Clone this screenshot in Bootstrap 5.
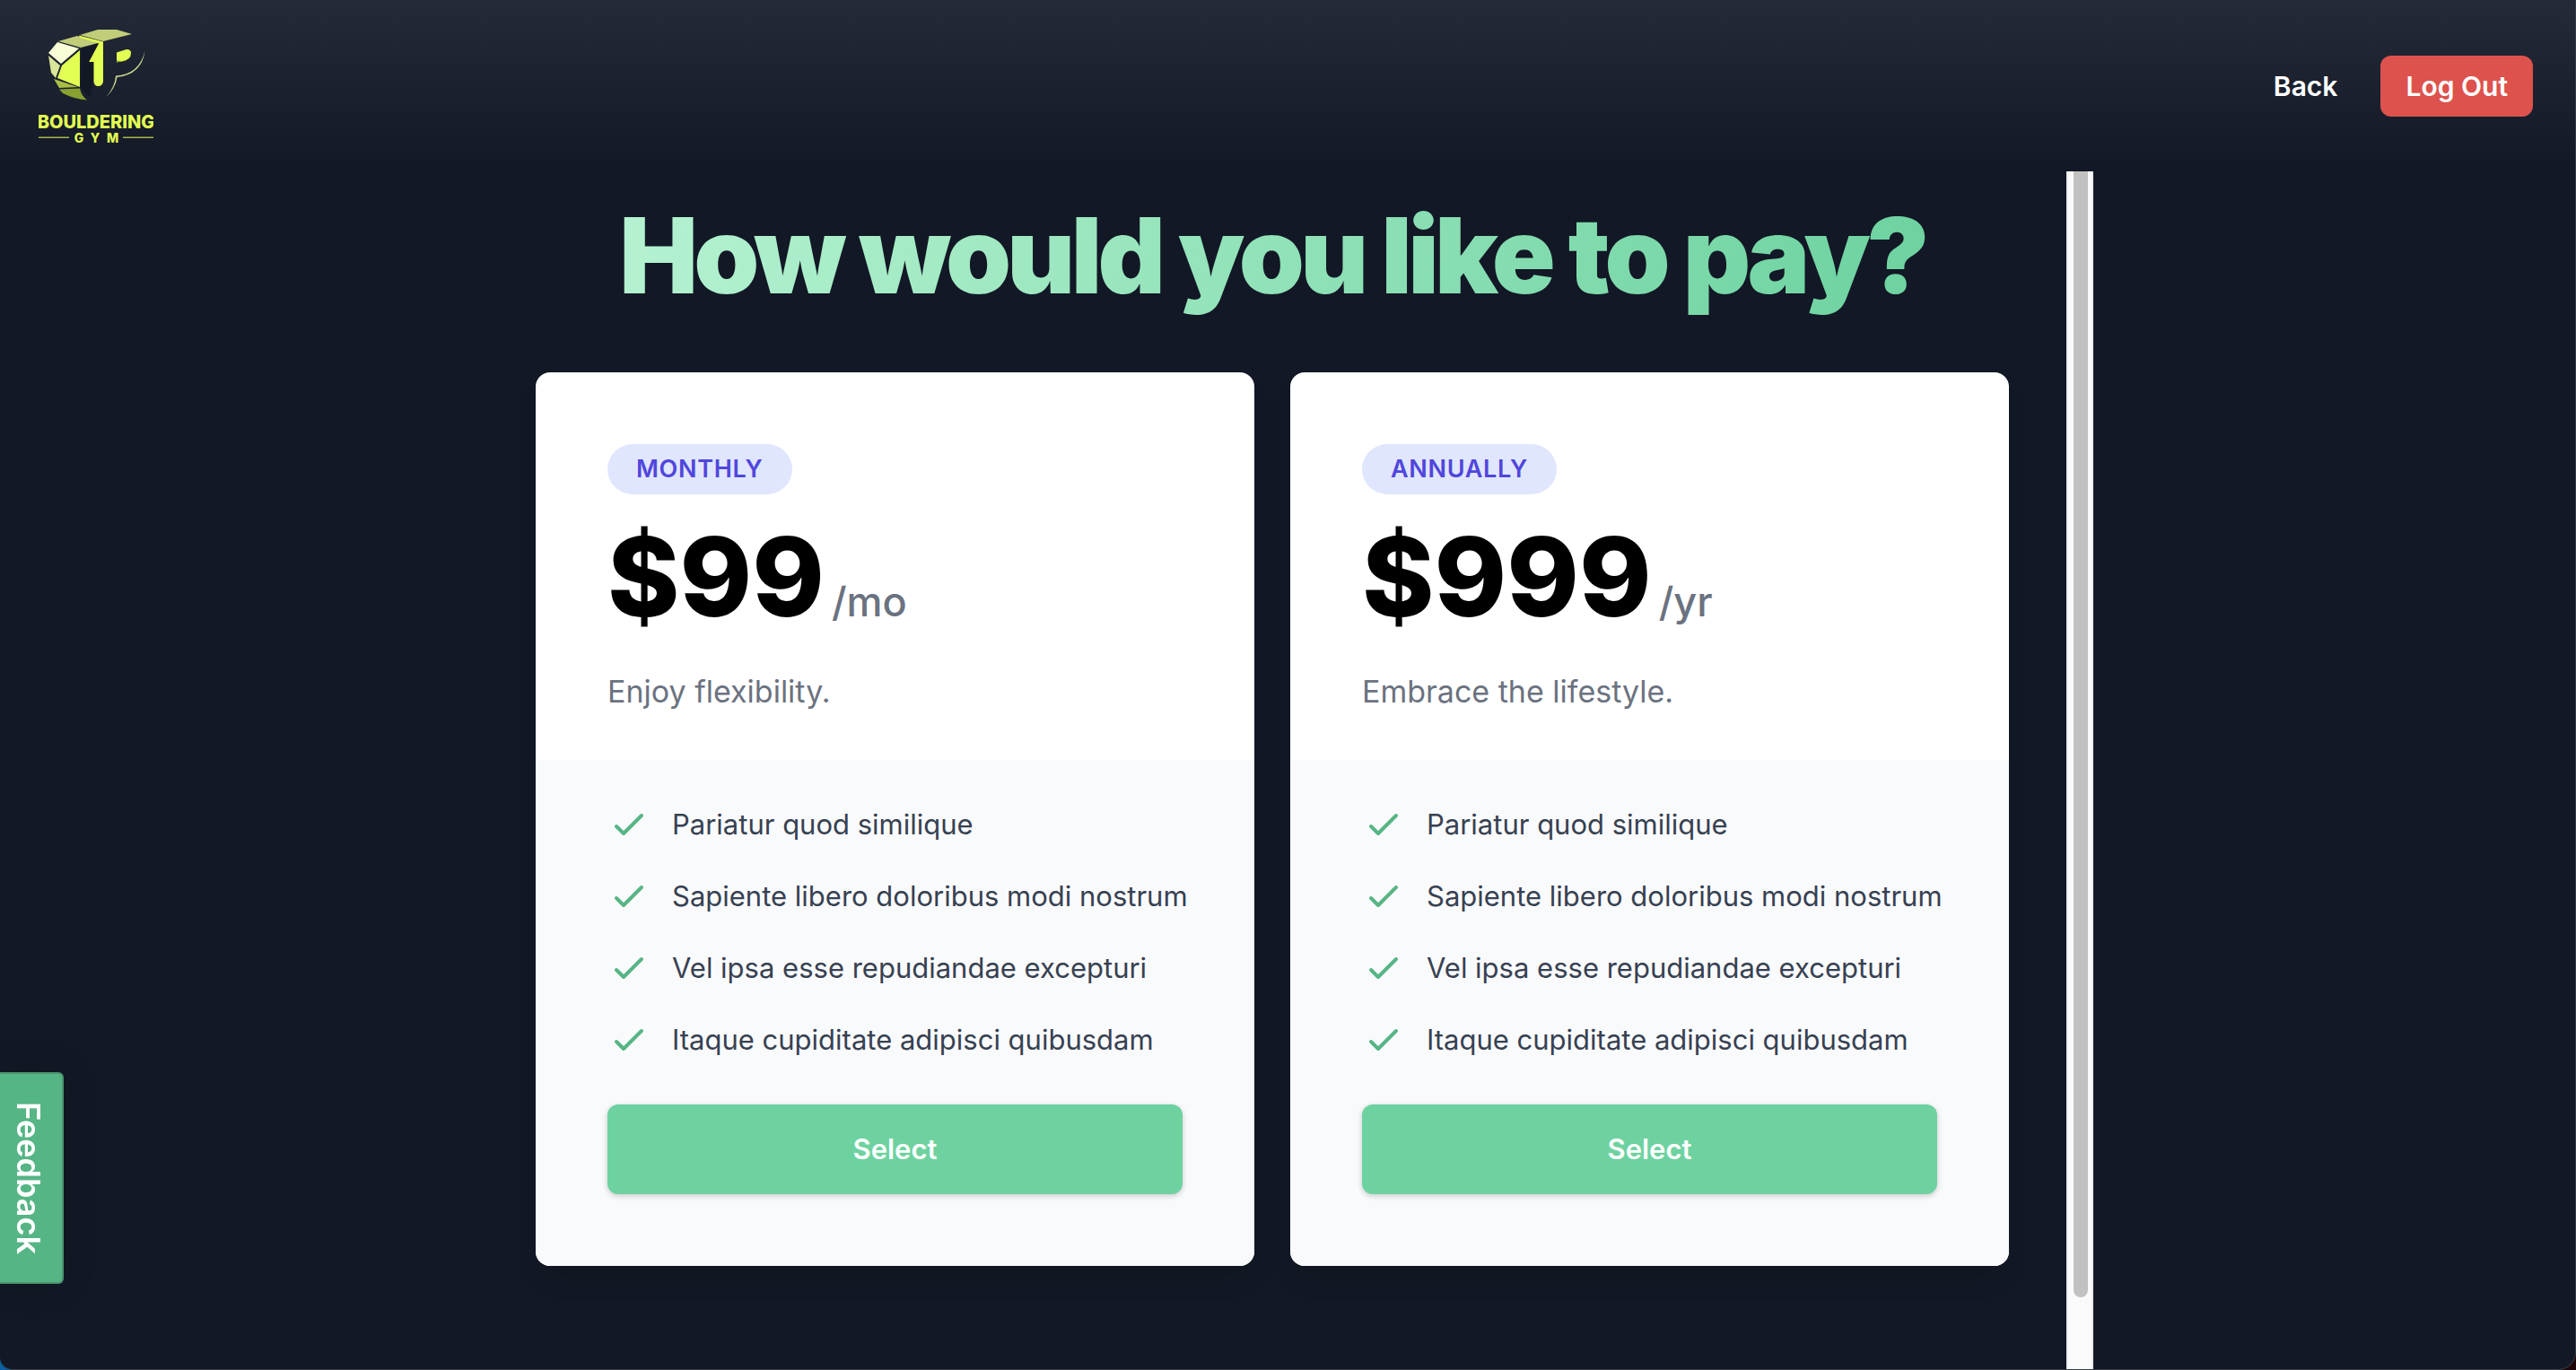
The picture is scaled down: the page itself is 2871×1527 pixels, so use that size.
<!DOCTYPE html>
<html lang="en">
<head>
<meta charset="utf-8">
<meta name="viewport" content="width=device-width, initial-scale=1">
<title>Bouldering Gym – Payment</title>
<link href="https://cdn.jsdelivr.net/npm/bootstrap@5.3.0/dist/css/bootstrap.min.css" rel="stylesheet">
<style>
  html { background: linear-gradient(to right, #0b5f9e, #1c0609 50%); min-height: 100%; }
  body {
    background: transparent;
    color: #374151;
    font-family: Inter, "Liberation Sans", sans-serif;
    font-size: 31px;
    line-height: 48px;
  }
  .app-shell {
    background: #121825;
    border-right: 1px solid #363b47;
    border-bottom: 1px solid #363b47;
    border-radius: 0 0 20px 14px;
    overflow: hidden;
  }
  .topbar {
    min-height: 191px;
    padding: 0 47px 0 43px;
    background: linear-gradient(#242a38, #121825);
  }
  .gym-logo { width: 128px; height: 128px; display: block; }
  .back-link, .back-link:hover { color: #fff; font-size: 30px; font-weight: 600; text-decoration: none; }
  .btn-logout {
    --bs-btn-color: #fff;
    --bs-btn-bg: #dd524c;
    --bs-btn-hover-color: #fff;
    --bs-btn-hover-bg: #c94640;
    --bs-btn-border-width: 0;
    --bs-btn-border-radius: 12px;
    --bs-btn-padding-x: 28px;
    --bs-btn-padding-y: 10px;
    --bs-btn-font-size: 30px;
    --bs-btn-line-height: 48px;
    --bs-btn-font-weight: 600;
  }
  .pay-panel { width: 100%; max-width: 1796px; }
  .pay-content { padding: 14px 64px 64px 60px; }
  .pay-title {
    font-size: 117px;
    line-height: 160px;
    font-weight: 900;
    letter-spacing: -0.04em;
    margin-bottom: 50px;
  }
  .pay-title span {
    background: linear-gradient(100deg, #b5f2d1, #6dd2a0);
    -webkit-background-clip: text;
    background-clip: text;
    color: transparent;
  }
  .plan-row { --bs-gutter-x: 40px; --bs-gutter-y: 40px; }
  .plan-card {
    --bs-card-border-width: 0;
    --bs-card-border-radius: 16px;
    --bs-card-inner-border-radius: 16px;
    --bs-card-bg: #fff;
    overflow: hidden;
    box-shadow: 0 20px 30px -6px rgba(0, 0, 0, .08);
  }
  .plan-head { padding: 80px 80px 48px; }
  .plan-body { padding: 48px 80px 80px; background: #f9fafc; }
  .plan-tag {
    padding: 4px 32px;
    background: #e0e6fd;
    color: #5046dc;
    font-size: 27px;
    line-height: 48px;
    font-weight: 600;
    letter-spacing: 0.025em;
    text-transform: uppercase;
  }
  .plan-price { margin-top: 32px; color: #000; font-size: 122px; line-height: 120px; font-weight: 800; }
  .plan-period { margin-left: 8px; color: #6b7280; font-size: 45px; line-height: 48px; font-weight: 500; }
  .plan-blurb { margin: 40px 0 0; color: #6b7280; font-size: 34px; line-height: 56px; }
  .perk-list { gap: 32px; margin-bottom: 48px; }
  .perk-list svg { width: 48px; height: 48px; margin-right: 24px; stroke: #56b585; }
  .btn-select {
    --bs-btn-color: #fff;
    --bs-btn-bg: #6dd2a0;
    --bs-btn-hover-color: #fff;
    --bs-btn-hover-bg: #5bc490;
    --bs-btn-border-width: 0;
    --bs-btn-border-radius: 12px;
    --bs-btn-padding-y: 26px;
    --bs-btn-font-size: 31px;
    --bs-btn-line-height: 48px;
    --bs-btn-font-weight: 600;
    box-shadow: 0 2px 6px rgba(0, 0, 0, .2);
  }
  .scroll-track {
    width: 30px;
    padding: 0 4px 0 6px;
    background: #fafafa;
    border: solid #ececec;
    border-width: 0 2px;
  }
  .scroll-thumb { width: 16px; height: 94%; background: #c1c1c1; border-radius: 0 0 8px 8px; }
  .feedback-tab {
    left: 0;
    bottom: 96px;
    width: 71px;
    padding: 31px 5px 31px 0;
    writing-mode: vertical-rl;
    background: #56b585;
    border: 2px solid #4a946f;
    border-left: 0;
    border-radius: 0 6px 6px 0;
    color: #fff;
    font-size: 36px;
    line-height: 64px;
    font-weight: 600;
    box-shadow: 0 0 40px rgba(0, 0, 0, .1);
  }
</style>
</head>
<body>
<div class="app-shell d-flex flex-column min-vh-100">
  <header class="topbar d-flex align-items-center justify-content-between">
    <a href="#" aria-label="Bouldering Gym home">
      <svg class="gym-logo" viewBox="43 31 128 128" aria-hidden="true">
        <path fill="#c1cd79" d="M65 45 86 39 113 46 90 52Z"/>
        <path fill="#c1cd79" d="M89 38 109 32H130L147 37 115 45Z"/>
        <path fill="#f8ffd6" d="M64 46 88 53 68 70 54 58Z"/>
        <path fill="#d9e598" d="M54 61 67 72 62 86 57 80Z"/>
        <path fill="#e2ff53" d="M69 72 89 55V96L64 86Z"/>
        <path fill="#a7bd45" d="M60 87 87 96 66 97Z"/>
        <path fill="#8aa031" d="M66 98.500 89 97.500Q90 105 97 110.500 84 110 70 103Z"/>
        <path fill="#e2ff53" d="M88 38.500 115 45.500V90Q114 95 109.500 95 105 95 104.500 90V68L99 68 110 47 89 41Z"/>
        <path fill="#121825" opacity=".9" d="M91 53 110 47.500 99 68H104V90L100 108 90 96Z"/>
        <path fill="#e2ff53" d="M130 57.500 141 54Q146 54 146 58 146 66 136 67.500L130 68Z"/>
        <path fill="#8aa031" d="M130 66.500 135 67 130 69Z"/>
        <path fill="#cbd78f" d="M161.500 56Q155 82 129 83.500 128 96 118 107.500 129 97 130.500 85 158 82 161.500 56Z"/>
        <g fill="#e2ff53" font-family="Inter, sans-serif" font-weight="800" text-anchor="middle">
          <text x="107" y="142" font-size="20">BOULDERING</text>
          <text x="88 106 125.500" y="157.500" font-size="14">GYM</text>
        </g>
        <path stroke="#a5b64a" stroke-width="1.500" d="M43 152.300H77M137 152.300H171"/>
      </svg>
    </a>
    <nav class="d-flex align-items-center gap-5">
      <a class="back-link" href="#">Back</a>
      <button type="button" class="btn btn-logout">Log Out</button>
    </nav>
  </header>

  <main class="pay-panel d-flex flex-grow-1 mx-auto">
    <div class="pay-content flex-grow-1">
      <h1 class="pay-title text-center"><span>How would you like to pay?</span></h1>
      <div class="row plan-row row-cols-1 row-cols-lg-2">
        <div class="col">
          <section class="card plan-card">
            <div class="plan-head">
              <h2 class="plan-tag d-inline-block rounded-pill mb-0 align-top">Monthly</h2>
              <div class="plan-price d-flex align-items-baseline">$99<span class="plan-period">/mo</span></div>
              <p class="plan-blurb">Enjoy flexibility.</p>
            </div>
            <div class="plan-body">
              <ul class="perk-list list-unstyled d-flex flex-column text-nowrap">
                <li class="d-flex"><svg class="flex-shrink-0" viewBox="0 0 24 24" fill="none" stroke-width="2" stroke-linecap="round" stroke-linejoin="round" aria-hidden="true"><path d="M5 13l4 4L19 7"/></svg>Pariatur quod similique</li>
                <li class="d-flex"><svg class="flex-shrink-0" viewBox="0 0 24 24" fill="none" stroke-width="2" stroke-linecap="round" stroke-linejoin="round" aria-hidden="true"><path d="M5 13l4 4L19 7"/></svg>Sapiente libero doloribus modi nostrum</li>
                <li class="d-flex"><svg class="flex-shrink-0" viewBox="0 0 24 24" fill="none" stroke-width="2" stroke-linecap="round" stroke-linejoin="round" aria-hidden="true"><path d="M5 13l4 4L19 7"/></svg>Vel ipsa esse repudiandae excepturi</li>
                <li class="d-flex"><svg class="flex-shrink-0" viewBox="0 0 24 24" fill="none" stroke-width="2" stroke-linecap="round" stroke-linejoin="round" aria-hidden="true"><path d="M5 13l4 4L19 7"/></svg>Itaque cupiditate adipisci quibusdam</li>
              </ul>
              <button type="button" class="btn btn-select w-100 d-block">Select</button>
            </div>
          </section>
        </div>
        <div class="col">
          <section class="card plan-card">
            <div class="plan-head">
              <h2 class="plan-tag d-inline-block rounded-pill mb-0 align-top">Annually</h2>
              <div class="plan-price d-flex align-items-baseline">$999<span class="plan-period">/yr</span></div>
              <p class="plan-blurb">Embrace the lifestyle.</p>
            </div>
            <div class="plan-body">
              <ul class="perk-list list-unstyled d-flex flex-column text-nowrap">
                <li class="d-flex"><svg class="flex-shrink-0" viewBox="0 0 24 24" fill="none" stroke-width="2" stroke-linecap="round" stroke-linejoin="round" aria-hidden="true"><path d="M5 13l4 4L19 7"/></svg>Pariatur quod similique</li>
                <li class="d-flex"><svg class="flex-shrink-0" viewBox="0 0 24 24" fill="none" stroke-width="2" stroke-linecap="round" stroke-linejoin="round" aria-hidden="true"><path d="M5 13l4 4L19 7"/></svg>Sapiente libero doloribus modi nostrum</li>
                <li class="d-flex"><svg class="flex-shrink-0" viewBox="0 0 24 24" fill="none" stroke-width="2" stroke-linecap="round" stroke-linejoin="round" aria-hidden="true"><path d="M5 13l4 4L19 7"/></svg>Vel ipsa esse repudiandae excepturi</li>
                <li class="d-flex"><svg class="flex-shrink-0" viewBox="0 0 24 24" fill="none" stroke-width="2" stroke-linecap="round" stroke-linejoin="round" aria-hidden="true"><path d="M5 13l4 4L19 7"/></svg>Itaque cupiditate adipisci quibusdam</li>
              </ul>
              <button type="button" class="btn btn-select w-100 d-block">Select</button>
            </div>
          </section>
        </div>
      </div>
    </div>
    <div class="scroll-track flex-shrink-0" aria-hidden="true"><div class="scroll-thumb"></div></div>
  </main>
</div>
<button type="button" class="feedback-tab position-fixed">Feedback</button>
<script src="https://cdn.jsdelivr.net/npm/bootstrap@5.3.0/dist/js/bootstrap.bundle.min.js"></script>
</body>
</html>
